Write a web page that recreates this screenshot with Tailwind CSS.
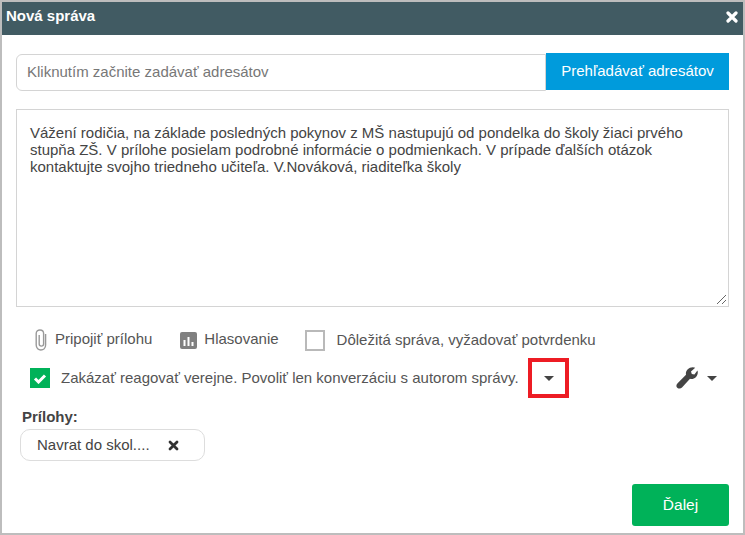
<!DOCTYPE html>
<html lang="en">
<head>
    <meta charset="UTF-8">
    <title>Nová správa</title>
    <script src="https://cdn.jsdelivr.net/npm/@tailwindcss/browser@4"></script>
</head>
<body class="bg-white font-['Liberation_Sans',Arial,sans-serif] text-[#555]">
    <div class="w-[745px] h-[535px] border-2 border-[#bdbdbd] overflow-hidden flex flex-col bg-white">
        <!-- Header -->
        <div class="h-[33px] shrink-0 bg-[#415b63] flex items-center justify-between pl-[4px] pr-[5px] text-white">
            <span class="text-[15px] font-bold relative -top-[2px]">Nová správa</span>
            <svg class="w-[12px] h-[12px] relative -top-[2px]" viewBox="0 0 12 12"><path d="M2 2 L10 10 M10 2 L2 10" stroke="#fff" stroke-width="3.2" stroke-linecap="round"/></svg>
        </div>

        <div class="flex-1 pl-[14px] pr-[14px] flex flex-col">
            <!-- Recipients -->
            <div class="flex mt-[18px] w-[713px] h-[38px]">
                <div class="w-[530px] h-[37px] mt-[1px] border border-[#d4d4d4] rounded-l-[6px] flex items-center pl-[10px] text-[15px] text-[#777]">Kliknutím začnite zadávať adresátov</div>
                <div class="w-[183px] h-[37px] bg-[#009bdc] text-white text-[15px] flex items-center justify-center">Prehľadávať adresátov</div>
            </div>

            <!-- Message -->
            <div class="relative w-[713px] h-[198px] mt-[18px] border border-[#d4d4d4] pl-[13px] pr-[13px] pt-[14px] text-[15px] leading-[17px] text-[#444]">
                Vážení rodičia, na základe posledných pokynov z MŠ nastupujú od pondelka do školy žiaci prvého stupňa ZŠ. V prílohe posielam podrobné informácie o podmienkach. V prípade ďalších otázok kontaktujte svojho triedneho učiteľa. V.Nováková, riaditeľka školy
                <svg class="absolute right-[1px] bottom-[1px] w-[11px] h-[11px]" viewBox="0 0 11 11"><path d="M1 10 L10 1 M6 10 L10 6" stroke="#666" stroke-width="1"/></svg>
            </div>

            <!-- Options -->
            <div class="flex items-center h-[26px] mt-[20px] text-[15px] text-[#555]">
                <svg class="w-[12px] h-[22px] ml-[19px]" viewBox="0 0 12 22" fill="none"><path d="M10.6 5 V16 C10.6 22.6 1.2 22.6 1.2 16 V4.5 C1.2 -0.2 8.6 -0.2 8.6 4.5 V15 C8.6 17.8 4.2 17.8 4.2 15 V6" stroke="#999" stroke-width="1.4"/></svg>
                <span class="ml-[8px] relative -top-[1px]">Pripojiť prílohu</span>
                <svg class="w-[17px] h-[17px] ml-[28px]" viewBox="0 0 17 17"><rect width="17" height="17" rx="2" fill="#808080"/><path d="M3.5 8 h2 v6 h-2z M7.5 5 h2 v9 h-2z M11.5 10 h2 v4 h-2z" fill="#fff"/></svg>
                <span class="ml-[7px] relative -top-[1px]">Hlasovanie</span>
                <span class="w-[20px] h-[21px] ml-[26px] border-2 border-[#b9b9b9] bg-white"></span>
                <span class="ml-[12px]">Dôležitá správa, vyžadovať potvrdenku</span>
            </div>

            <!-- Reply restriction -->
            <div class="flex items-center h-[40px] mt-[5px] text-[15px] text-[#555]">
                <span class="w-[20px] h-[20px] ml-[14px] bg-[#00b259] flex items-center justify-center">
                    <svg class="w-[14px] h-[11px]" viewBox="0 0 14 11"><path d="M2 5.5 L5.5 9 L12 2.5" stroke="#fff" stroke-width="3" fill="none"/></svg>
                </span>
                <span class="ml-[11px] w-[467px] whitespace-nowrap">Zakázať reagovať verejne. Povoliť len konverzáciu s autorom správy.</span>
                <span class="w-[41px] h-[40px] border-4 border-[#ed1c24] flex items-center justify-center">
                    <span class="w-0 h-0 border-x-[5px] border-x-transparent border-t-[5px] border-t-[#444]"></span>
                </span>
                <svg class="w-[22px] h-[22px] ml-[107px]" viewBox="0 0 22 22"><path d="M21.8 5.2 C21.8 9.8 17.5 13 14 11.8 L6 20.6 C4.4 22.2 0.9 21.8 0.4 19.2 C0.3 18 0.7 17 1.6 16.2 L10 7.8 C9.2 4 12.2 0.2 16.8 0.2 C17.8 0.2 18.6 0.4 19.2 0.8 L15 4.4 L15.8 6.9 L18.4 7.6 L21.4 3.4 C21.6 3.9 21.8 4.5 21.8 5.2 Z" fill="#444"/></svg>
                <span class="ml-[9px] w-0 h-0 border-x-[5px] border-x-transparent border-t-[5px] border-t-[#444]"></span>
            </div>

            <!-- Attachments -->
            <div class="mt-[11px] ml-[6px] text-[15px] font-bold text-[#444] leading-[16px]">Prílohy:</div>
            <div class="flex items-center w-[185px] h-[32px] mt-[4px] ml-[4px] border border-[#ddd] rounded-[10px] pl-[16px] text-[15px] text-[#444]">
                <span class="w-[131px] whitespace-nowrap">Navrat do skol....</span>
                <svg class="w-[11px] h-[11px]" viewBox="0 0 11 11"><path d="M2 2 L9 9 M9 2 L2 9" stroke="#333" stroke-width="2.8" stroke-linecap="round"/></svg>
            </div>

            <!-- Footer -->
            <div class="flex justify-end w-[713px] mt-[23px]">
                <div class="w-[97px] h-[42px] bg-[#00b259] rounded-[3px] text-white text-[15.5px] flex items-center justify-center">Ďalej</div>
            </div>
        </div>
    </div>
</body>
</html>
